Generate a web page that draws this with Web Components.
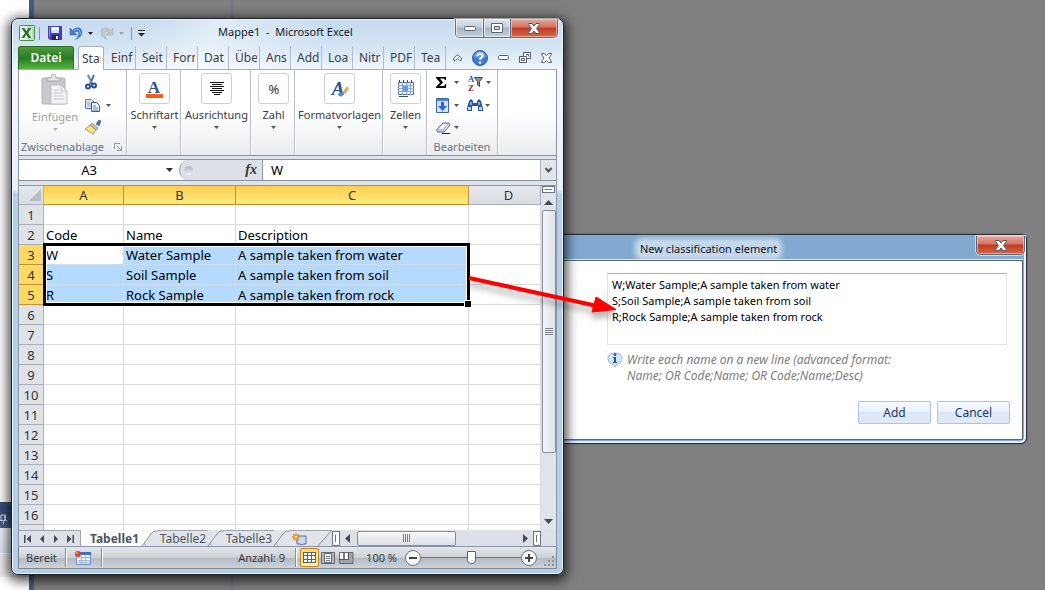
<!DOCTYPE html>
<html lang="de">
<head>
<meta charset="utf-8">
<title>Mappe1 - Microsoft Excel</title>
<style>
html, body { margin: 0; height: 100%; overflow: hidden; }
body { font: 12px/16px "Noto Sans", "Open Sans", sans-serif; color: #1e1e1e; }
</style>
</head>
<body>
<desk-top>
  <classification-dialog></classification-dialog>
  <excel-window></excel-window>
  <pointer-arrow></pointer-arrow>
</desk-top>

<script>
const base = `:host,*{box-sizing:border-box} button{font:inherit;color:inherit;border:0;padding:0;margin:0;background:none} svg{display:block;flex:none;overflow:visible}`;

function define(name, css, html) {
  const template = document.createElement('template');
  template.innerHTML = `<style>${base}${css}</style>${html}`;
  customElements.define(name, class extends HTMLElement {
    constructor() {
      super();
      this.attachShadow({ mode: 'open' }).append(template.content.cloneNode(true));
    }
  });
}

const svg = (w, h, body) => `<svg width="${w}" height="${h}" viewBox="0 0 ${w} ${h}" aria-hidden="true">${body}</svg>`;
const caret = (c = '#555') => svg(5, 3, `<path d="M0 0h5L2.500 3z" fill="${c}"/>`);

const icons = {
  excel: svg(16, 16, `<rect x=".5" y=".5" width="15" height="15" rx="1" fill="#f4faf2" stroke="#3f8f45"/><path d="M9 2h5v12H9z" fill="#fff" stroke="#8fbd8c"/><path d="M9 5h5M9 8h5M9 11h5" stroke="#9fcb9c"/><path d="M2.500 3h3l2 3.300L9.500 3h3L9 8l3.500 5h-3l-2.100-3.400L5.300 13h-3L6 8z" fill="#1f7a2c"/>`),
  save: svg(14, 14, `<path d="M0 0h14v14H2l-2-2z" fill="#4343b4"/><path d="M1 1h1v10H1z" fill="#8c8ce6"/><path d="M3 1h8v6H3z" fill="#f4f8ff"/><path d="M3 4h8v3H3z" fill="#cfe0f8"/><path d="M4 9h7v5H4z" fill="#24245e"/><path d="M8 10h2v3H8z" fill="#fff"/>`),
  undo: svg(12, 14, `<path d="M0 2v7h7L4.500 6.500C7 4.500 9 5.500 8.500 8.500 8.200 10.500 7 12 5.500 13.500 10 12 12 9 12 6 12 1.500 6.500 0 2.500 4.300z" fill="#4b7cc4" stroke="#3563a8" stroke-width=".5"/><path d="M4 4.500c4-3 7 0 6 4" fill="none" stroke="#8db7ee"/>`),
  redo: svg(12, 14, `<path d="M12 2v7H5l2.500-2.500C5 4.500 3 5.500 3.500 8.500c.3 2 1.500 3.500 3 5C2 12 0 9 0 6c0-4.500 5.500-6 9.500-1.700z" fill="#c0c6ce" stroke="#a4abb5" stroke-width=".5"/>`),
  paste: svg(28, 31, `<rect x="1" y="4" width="23" height="26" rx="1" fill="#c9c9cb" stroke="#b3b3b5"/><path d="M6 7V4h4c0-5 5-5 5 0h4v3z" fill="#e8e8e8" stroke="#a5a5a5"/><path d="M10 11h10l6 6v13H10z" fill="#f3f3f5" stroke="#bdbdbf"/><path d="M20 11v6h6M13 16h5M13 19h9M13 22h10M13 25h10" fill="none" stroke="#c5c5c8"/>`),
  cut: svg(12, 15, `<path d="M3 0l4 9M9 0L5 9" stroke="#4c6fa8" stroke-width="2" fill="none"/><path d="M3 1l3 6" stroke="#a8b6cc"/><circle cx="3" cy="11.500" r="2" fill="none" stroke="#23509a" stroke-width="2"/><circle cx="9" cy="10.500" r="2" fill="none" stroke="#23509a" stroke-width="2"/>`),
  copy: svg(16, 13, `<path d="M.5.500h6l3 3v6h-9z" fill="#e7f0fc" stroke="#4c74b2"/><path d="M2 3h3M2 5h5M2 7h5" stroke="#7aa2da"/><path d="M6.500 3.500h5l3 3v6h-8z" fill="#f3f8ff" stroke="#2c5ba6"/><path d="M8 7h3M8 9h5M8 11h5" stroke="#4d80c8"/>`),
  brush: svg(17, 15, `<path d="M11 4l3-4 2 1-2 5z" fill="#5966a6" stroke="#3c457e" stroke-width=".5"/><path d="M7 3l6 5-2 2-6-5z" fill="#c5cad3" stroke="#5a5a70" stroke-width=".6"/><path d="M5 5l6 5-3 4-8-5z" fill="#f2d86d" stroke="#8e762a" stroke-width=".6"/><path d="M3 8l5 4M5 7l4 4" stroke="#fff2ad"/>`),
  launch: svg(8, 8, `<path d="M.5 6V.500H6M3 3l4 4M7.500 3v4.500H3" fill="none" stroke="#90959e"/>`),
  font: svg(17, 19, `<text x="8" y="14" text-anchor="middle" font-family="Liberation Serif" font-weight="bold" font-size="17" fill="#2d4f8e">A</text><path d="M0 15h17v4H0z" fill="#ff5a17"/>`),
  align: svg(14, 13, `<path d="M0 .500h14M2 2.500h10M0 4.500h14M2 6.500h10M0 8.500h14M2 10.500h10M4 12.500h6" stroke="#111"/>`),
  percent: svg(16, 20, `<text x="8" y="15" text-anchor="middle" font-family="Noto Sans" font-size="13" fill="#333">%</text>`),
  styles: svg(18, 24, `<text x="7" y="18" text-anchor="middle" font-family="Liberation Serif" font-style="italic" font-weight="bold" font-size="19" fill="#2d4f8e">A</text><path d="M12 15l4-5 1.500 1.500-3.500 5z" fill="#e8be4c" stroke="#8a6a24" stroke-width=".5"/><path d="M7 17c2-2 4-2 6-1-1 4-4 5-6 1z" fill="#4b86d9"/>`),
  cells: svg(17, 17, `<path d="M1.500 2.500h15v12h-15z" fill="#eef4fc" stroke="#54719f"/><path d="M1 5.500h16M1 8.500h16M1 11.500h16M5.500 2v13M9.500 2v13M13.500 2v13" stroke="#91a9cd"/><path d="M6 6h5v5H6z" fill="#5f9bea"/><path d="M2.500 0v3M6.500 0v3M10.500 0v3M14.500 0v3M2 16.500h9" stroke="#354a70"/>`),
  sum: svg(11, 11, `<path d="M0 0h10v3H9L8 1.500H4L7 5.500 3.500 9H8l1.500-2h.8L10 11H0v-1l4-4.500L0 1z" fill="#000"/>`),
  sort: svg(17, 18, `<text x="4" y="8" text-anchor="middle" font-family="Liberation Serif" font-weight="bold" font-size="9" fill="#2d5ba7">A</text><text x="4" y="17" text-anchor="middle" font-family="Liberation Serif" font-weight="bold" font-size="9" fill="#9c2525">Z</text><path d="M7.500 3.500h8L12.500 7.500v5l-2-1.500V7.500z" fill="#999" stroke="#444"/>`),
  fill: svg(13, 15, `<path d="M.5.500h12v14H.500z" fill="#cfe0f7" stroke="#3c64a4"/><path d="M1 1h11v2H1z" fill="#4a82de"/><path d="M5 4h3v4h3l-4.500 5L2 8h3z" fill="#2867cf"/>`),
  find: svg(16, 14, `<path d="M2 3l2-2 2 2v2h4V3l2-2 2 2 2 7v3h-5V8H5v5H0v-3z" fill="#2d5796"/><path d="M1 9h3v3H1zM12 9h3v3h-3z" fill="#b9d3f5"/><path d="M3 4h2v3H3zM11 4h2v3h-2z" fill="#7ea4da"/>`),
  erase: svg(15, 12, `<path d="M7 1h6l1 2-6 7H2L.5 8z" fill="#f4f7fc" stroke="#445f95"/><path d="M1 8h6l6-7" fill="none" stroke="#7c93bb"/><path d="M6 11.500h8" stroke="#222"/>`),
  fold: svg(9, 7, `<path d="M.7 4L4.500.700 8.300 4v2.300H6.500l-2-2-2 2H.700z" fill="#fff" stroke="#56606c"/>`),
  help: svg(16, 16, `<circle cx="8" cy="8" r="7.500" fill="#3f7bd0" stroke="#2b5da8"/><path d="M2 7a6 6 0 0 1 12 0q-6 2-12 0z" fill="#8db6ec" opacity=".6"/><path d="M5.500 6C5.500 3 10.500 3 10.500 6c0 2-2.500 1.800-2.500 4" fill="none" stroke="#fff" stroke-width="2"/><circle cx="8" cy="12.500" r="1.200" fill="#fff"/>`),
  mini: svg(11, 5, `<rect x=".5" y=".5" width="10" height="4" rx="1" fill="#fff" stroke="#56606c"/>`),
  restore: svg(12, 11, `<path d="M4.500.500h7v6h-7z" fill="#fff" stroke="#56606c"/><path d="M7 2.500h2.500v2" fill="none" stroke="#56606c"/><path d="M.5 4.500h7v6h-7z" fill="#fff" stroke="#56606c"/><path d="M2.500 6.500h3v2h-3z" fill="none" stroke="#56606c"/>`),
  closeDoc: svg(11, 10, `<path d="M.5.500h3l2 2 2-2h3v1L8 5l2.500 3.500v1h-3l-2-2-2 2h-3v-1L3 5 .500 1.500z" fill="#fff" stroke="#56606c"/>`),
  closeWin: svg(12, 11, `<path d="M.5.500h3.500l2 2.500 2-2.500h3.500v1L8.500 5.500l3 4v1H8l-2-2.500-2 2.500H.500v-1l3-4-3-4z" fill="#fff" stroke="#54545f"/>`),
  minWin: svg(12, 5, `<rect x=".5" y=".5" width="11" height="4" rx="1" fill="#fff" stroke="#5b6470"/>`),
  maxWin: svg(12, 10, `<path d="M.5.500h11v9H.500z" fill="#fff" stroke="#5b6470"/><path d="M3.500 3.500h5v3h-5z" fill="#ccd3dc" stroke="#5b6470"/>`),
  first: svg(7, 8, `<path d="M0 0h1.500v8H0zM7 0v8L2.500 4z" fill="#454d59"/>`),
  prev: svg(4, 8, `<path d="M4 0v8L0 4z" fill="#454d59"/>`),
  next: svg(4, 8, `<path d="M0 0v8l4-4z" fill="#454d59"/>`),
  last: svg(7, 8, `<path d="M5.500 0H7v8H5.500zM0 0v8l4.500-4z" fill="#454d59"/>`),
  newSheet: svg(15, 12, `<path d="M5 3h9v8h-3l-1 1-2-1H5z" fill="#c9dcf5" stroke="#4f6fa0"/><path d="M4 0v8M0 4h8M1.200 1.200l5.600 5.600M6.800 1.200L1.200 6.800" stroke="#e98b16" stroke-width="1.300"/><circle cx="4" cy="4" r="1.300" fill="#fff3c0"/>`),
  macro: svg(16, 14, `<path d="M1.500 1.500h14v12h-14z" fill="#f0f5ff" stroke="#6f8fc8"/><path d="M1 1h15v3H1z" fill="#3b6fd0"/><path d="M3 6.500h12M3 9.500h12M3 11.500h12M6.500 5v8M10.500 5v8" stroke="#9fb7e0"/><circle cx="3" cy="3" r="3" fill="#d9472a"/><circle cx="2" cy="2" r="1" fill="#f79c84"/>`),
  grid: svg(13, 11, `<path d="M0 0h13v11H0z" fill="#5d616b"/><path d="M1 1h3v2H1zM5 1h3v2H5zM9 1h3v2H9zM1 4h3v3H1zM5 4h3v3H5zM9 4h3v3H9zM1 8h3v2H1zM5 8h3v2H5zM9 8h3v2H9z" fill="#fff"/>`),
  page: svg(14, 12, `<path d="M.5.500h13v11H.500z" fill="#b5b9c1" stroke="#666a73"/><path d="M3.500 1.500h7v9h-7z" fill="#fff" stroke="#666a73"/><path d="M5 4.500h4M5 6.500h4M5 8.500h4" stroke="#777"/>`),
  breaks: svg(15, 12, `<path d="M.5.500h13.500v11H.500z" fill="#9ea3ac" stroke="#666a73"/><path d="M1 1h3v6H1zM6 1h3v6H6z" fill="#fff"/><path d="M5 0v7.500H0M9.500 0v7.500H5" fill="none" stroke="#555"/>`),
  info: svg(16, 16, `<path d="M8 1c4 0 7 2 7 5.500S12 12 9.500 12.500L8 15l-1.500-2.500C4 12 1 10.500 1 6.500S4 1 8 1z" fill="#d4e6f8" stroke="#9ab6d2"/><circle cx="8" cy="2.600" r="1.400" fill="#24539c"/><path d="M6 5h3v5h1v1H6v-1h1V6H6z" fill="#24539c"/>`),
  pin: svg(7, 10, `<path d="M1 6.500V1h4.500v5.500M0 6.500h7M3.500 7v3M4.500 1v5" fill="none" stroke="#cfd9ef"/>`)
};

define('desk-top', `
  :host{display:block;position:relative;height:100%;min-height:590px;overflow:hidden;
    background:linear-gradient(90deg,#fff 0 29px,#445a86 29px 34px,#808080 34px 230px,#787883 230px 234px,#808080 234px)}
  .dock{position:absolute;left:0;top:502px;width:29px}
  .head{height:26px;background:linear-gradient(#344a74,#4d638f);border-top:4px solid #3c5078;padding:8px 0 0}
  .row{height:25px;background:linear-gradient(#f4f7fb,#dbe7f4)}
  .row+.row{height:24px;background:#ececee;border-top:1px solid #fff}`,
  `<div class="dock"><div class="head">${icons.pin}</div><div class="row"></div><div class="row"></div></div><slot></slot>`);

define('pointer-arrow', `
  :host{display:block;position:absolute;left:calc(100% - 576px);top:270px;width:156px;height:54px;pointer-events:none;
    filter:drop-shadow(0 6px 3px rgba(0,0,0,.3))}`,
  svg(156, 54, `<path d="M0 8L128 36" stroke="#f00" stroke-width="4"/><path d="M127 27L147 39.500 123 42z" fill="#f00" stroke="#f00"/>`));

define('window-buttons', `
  :host{display:flex;height:19px;border:1px solid #5d6977;border-top:0;border-radius:0 0 5px 5px;overflow:hidden;
    box-shadow:0 0 0 1px rgba(255,255,255,.6)}
  button{display:grid;place-items:center;width:27px;
    background:linear-gradient(#dbe5ef,#c4d0dd 45%,#a5b5c8 50%,#c3d2e2);box-shadow:inset 0 0 0 1px rgba(255,255,255,.6)}
  button+button{border-left:1px solid #5d6977}
  .close{width:47px;background:linear-gradient(#e4a99e,#d4735f 45%,#bf3a20 50%,#d6694b);box-shadow:inset 0 0 0 1px rgba(255,210,200,.6)}
  :host([single]) .tool{display:none}
  :host([single]) .close{border-left:0}`,
  `<button class="tool" aria-label="Minimieren">${icons.minWin}</button><button class="tool" aria-label="Maximieren">${icons.maxWin}</button><button class="close" aria-label="Schließen">${icons.closeWin}</button>`);

define('classification-dialog', `
  :host{display:flex;flex-direction:column;position:absolute;right:18px;top:234px;width:487px;padding:1px 3px 3px 0;
    border:1px solid #2b3138;border-radius:6px;background:#84a9d0;box-shadow:inset -1px -1px 0 1px #e4f0fb,0 0 2px rgba(0,0,0,.4)}
  header{display:flex;height:24px;align-items:flex-start;justify-content:space-between;padding-left:97px;margin-right:-2px}
  h1{margin:5px 0 0;font-size:11px;line-height:16px;font-weight:400;color:#10151c;padding:0 2px;
    background:rgba(225,236,247,.7);box-shadow:0 0 5px 3px rgba(225,236,247,.7);border-radius:4px}
  main{background:#fff;border:1px solid #5a6470;box-shadow:0 -1px 0 #dcebf8;padding:12px 15px 15px 65px}
  textarea{display:block;width:100%;height:72px;resize:none;border:1px solid #dfe2e8;border-top-color:#abadb3;background:#fff;
    padding:3px 4px;font:11px/16px "Noto Sans","Open Sans",sans-serif;color:#000;outline:0;overflow:hidden}
  .hint{display:flex;gap:4px;margin:7px 0 0;font-style:italic;color:#7d7d7d}
  p{margin:0}
  footer{display:flex;justify-content:flex-end;gap:6px;margin:17px -3px 0 0}
  footer button{width:73px;height:23px;border:1px solid #a9c3e3;border-radius:2px;color:#1e395b;
    background:linear-gradient(#f7fafe,#e9f1fb 45%,#dce8f7 50%,#dfe9f7)}`,
  `<header><h1>New classification element</h1><window-buttons single></window-buttons></header>
  <main>
    <textarea aria-label="Classification names" spellcheck="false">W;Water Sample;A sample taken from water
S;Soil Sample;A sample taken from soil
R;Rock Sample;A sample taken from rock</textarea>
    <div class="hint">${icons.info}<p>Write each name on a new line (advanced format:<br>Name; OR Code;Name; OR Code;Name;Desc)</p></div>
    <footer><button>Add</button><button>Cancel</button></footer>
  </main>`);

define('excel-window', `
  :host{display:flex;flex-direction:column;position:absolute;left:11px;top:18px;bottom:15px;width:calc(100% - 492px);
    border:1px solid #1d2127;border-radius:7px;padding:0 6px 5px;
    background:linear-gradient(115deg,rgba(255,255,255,0) 120px,rgba(255,255,255,.45) 190px,rgba(255,255,255,0) 290px) 0 0/100% 50px no-repeat,
      linear-gradient(#c5daee,#d5e5f4 30px,#f2f7fc 52px,#e6f0f9 170px,#b6d0ea 175px,#b4cee9);
    box-shadow:inset 0 0 0 1px #eaf5fd,0 3px 12px 3px rgba(0,0,0,.72)}
  sheet-view{flex:1;min-height:0}`,
  `<title-bar>Mappe1&nbsp; -&nbsp; Microsoft Excel</title-bar>
  <ribbon-tabs></ribbon-tabs><ribbon-panel></ribbon-panel><formula-bar></formula-bar>
  <sheet-view></sheet-view><sheet-tabs></sheet-tabs><status-bar></status-bar>`);

define('title-bar', `
  :host{display:flex;flex:none;height:27px;margin-right:-1px;align-items:flex-start}
  nav{display:flex;align-items:center;height:16px;margin-top:6px;padding-left:1px;width:190px}
  nav button{margin-left:8px}
  nav .drop{margin-left:6px}
  i{width:1px;height:13px;background:#8795a6;margin-left:4px}
  i.far{margin-left:7px}
  h1{flex:1;margin:5px 0 0;font-size:11px;line-height:16px;font-weight:400;color:#14181d;padding-left:10px;white-space:nowrap}`,
  `<nav>${icons.excel}<i></i><button aria-label="Speichern">${icons.save}</button>
    <button aria-label="Rückgängig">${icons.undo}</button><button class="drop" aria-label="Rückgängig-Liste">${caret('#222')}</button>
    <button aria-label="Wiederholen">${icons.redo}</button><button class="drop" aria-label="Wiederholen-Liste">${caret('#9aa4b0')}</button>
    <i class="far"></i><button class="drop" aria-label="Symbolleiste anpassen">${svg(7, 7, '<path d="M0 .500h7" stroke="#222"/><path d="M0 3h7L3.500 6.500z" fill="#222"/>')}</button></nav>
  <h1><slot></slot></h1><window-buttons></window-buttons>`);

define('ribbon-tab', `
  :host{display:block;flex:0 1 31px;min-width:0;border-right:1px solid #b3bcc8;height:23px}
  button{display:block;width:100%;height:100%;padding:1px 2px 0 6px;text-align:left;color:#3b3f46}
  span{display:block;overflow:hidden;white-space:nowrap;line-height:16px}
  :host([file]){flex-basis:56px;border:1px solid #2c6b25;border-bottom:0;border-radius:3px 3px 0 0;margin-right:4px;
    background:linear-gradient(#4c9c3a,#2a7a24 50%,#2f8a25 60%,#58b53e)}
  :host([file]) button{color:#fff;text-align:center;padding:0;font-weight:600}
  :host([active]){flex-basis:26px;height:24px;background:#fff;border:1px solid #a9b2be;border-bottom:0;border-radius:3px 3px 0 0;margin-right:1px;z-index:1}
  :host([active]) button{padding-left:3px}`,
  `<button role="tab"><span><slot></slot></span></button>`);

define('ribbon-tabs', `
  :host{display:flex;flex:none;height:23px;justify-content:space-between;position:relative;z-index:1}
  .tabs{display:flex;flex:0 1 428px;min-width:0}
  .tools{display:flex;align-items:center;gap:10px;padding-right:5px}`,
  `<div class="tabs" role="tablist"><ribbon-tab file>Datei</ribbon-tab><ribbon-tab active>Start</ribbon-tab><ribbon-tab>Einf</ribbon-tab><ribbon-tab>Seit</ribbon-tab><ribbon-tab>Form</ribbon-tab><ribbon-tab>Dat</ribbon-tab><ribbon-tab>Übe</ribbon-tab><ribbon-tab>Ans</ribbon-tab><ribbon-tab>Add</ribbon-tab><ribbon-tab>Loa</ribbon-tab><ribbon-tab>Nitr</ribbon-tab><ribbon-tab>PDF</ribbon-tab><ribbon-tab>Tea</ribbon-tab></div>
  <div class="tools"><button aria-label="Menüband minimieren">${icons.fold}</button><button aria-label="Hilfe">${icons.help}</button><button aria-label="Fenster minimieren">${icons.mini}</button><button aria-label="Fenster wiederherstellen">${icons.restore}</button><button aria-label="Fenster schließen">${icons.closeDoc}</button></div>`);

define('ribbon-group', `
  :host{display:block;height:100%;border-right:1px solid #b9bec6;box-shadow:1px 0 0 #fff;text-align:center;white-space:nowrap;color:#3c3c3c}
  button{display:flex;flex-direction:column;align-items:center;width:100%;padding:3px 0 0 2px}
  .box{display:grid;place-items:center;width:31px;height:31px;border:1px solid #cfd0d4;border-radius:3px;background:#fff}
  .name{line-height:16px;margin:3px 0}`,
  `<button><span class="box"><slot name="icon"></slot></span><span class="name"><slot></slot></span>${caret()}</button>`);

define('ribbon-panel', `
  :host{display:flex;flex:none;height:87px;border:1px solid #a3acb8;border-bottom-color:#8b929c;border-left-color:#8a96a5;border-right-color:#8a96a5;
    background:linear-gradient(#fff 50%,#e9ecf0);font-size:11px}
  .set{display:flex;flex-direction:column;border-right:1px solid #b9bec6;box-shadow:1px 0 0 #fff;color:#6b7280}
  .clip{width:108px}
  .edit{width:71px}
  .body{display:flex;flex:1}
  .paste{display:flex;flex-direction:column;align-items:center;width:60px;margin-left:6px;padding-top:4px;color:#a0a0a0}
  .paste span{margin:4px 0 3px;line-height:16px}
  .col{display:flex;flex-direction:column;justify-content:space-between;height:60px;margin-top:5px}
  .line{display:flex;align-items:center;justify-content:space-between;gap:5px;height:15px}
  .foot{display:flex;align-items:center;justify-content:space-between;height:16px;padding:0 4px 0 2px}
  .edit .foot{justify-content:center;padding:0}
  .edit .body{gap:8px;padding-left:9px}
  .edit .col{width:23px}
  .edit .line{gap:2px}
  .g1{width:54px}.g2{width:70px}.g3{width:44px}.g4{width:88px}.g5{width:44px}`,
  `<section class="set clip"><div class="body"><button class="paste">${icons.paste}<span>Einfügen</span>${caret('#b5b5b5')}</button>
    <div class="col"><button class="line" aria-label="Ausschneiden">${icons.cut}</button><button class="line" aria-label="Kopieren">${icons.copy}${caret()}</button><button class="line" aria-label="Format übertragen">${icons.brush}</button></div></div>
    <div class="foot"><span>Zwischenablage</span><button aria-label="Zwischenablage öffnen">${icons.launch}</button></div></section>
  <ribbon-group class="g1"><span slot="icon">${icons.font}</span>Schriftart</ribbon-group>
  <ribbon-group class="g2"><span slot="icon">${icons.align}</span>Ausrichtung</ribbon-group>
  <ribbon-group class="g3"><span slot="icon">${icons.percent}</span>Zahl</ribbon-group>
  <ribbon-group class="g4"><span slot="icon">${icons.styles}</span>Formatvorlagen</ribbon-group>
  <ribbon-group class="g5"><span slot="icon">${icons.cells}</span>Zellen</ribbon-group>
  <section class="set edit"><div class="body">
    <div class="col"><button class="line" aria-label="Summe">${icons.sum}${caret()}</button><button class="line" aria-label="Füllbereich">${icons.fill}${caret()}</button><button class="line" aria-label="Löschen">${icons.erase}${caret()}</button></div>
    <div class="col"><button class="line" aria-label="Sortieren und Filtern">${icons.sort}${caret()}</button><button class="line" aria-label="Suchen">${icons.find}${caret()}</button><span class="line"></span></div></div>
    <div class="foot"><span>Bearbeiten</span></div></section>`);

define('formula-bar', `
  :host{display:flex;flex:none;height:29px;padding:3px 0 4px;background:#dfe3ea;border:1px solid #8a96a5;border-width:0 1px}
  .in{display:flex;flex:1;min-width:0;border:1px solid #8a919c;border-width:1px 0;background:#fff}
  input{border:0;outline:0;background:none;padding:0;min-width:0;font:13px/20px "Noto Sans","Open Sans",sans-serif;color:#000}
  .name{width:140px;text-align:center}
  .pick{display:grid;place-items:center;width:20px}
  .fx{display:flex;align-items:center;justify-content:space-between;width:84px;padding:0 5px 0 4px;background:#dde1e7;
    border:1px solid #8f98a5;border-width:0 1px 0 1px;border-radius:11px 0 0 11px}
  .knob{width:9px;height:9px;border-radius:50%;background:linear-gradient(#aab2bd,#f2f4f7)}
  .fx button{font:italic bold 14px/20px "Liberation Serif",serif;color:#333}
  .val{flex:1;padding-left:8px}
  .more{width:16px;background:#e2e5ea;border-left:1px solid #a9b0ba;display:grid;place-items:center}`,
  `<div class="in"><input class="name" aria-label="Namenfeld" value="A3"><button class="pick" aria-label="Namen">${svg(7, 4, '<path d="M0 0h7L3.500 4z" fill="#333"/>')}</button>
   <span class="fx"><span class="knob"></span><button aria-label="Funktion einfügen">fx</button></span>
   <input class="val" aria-label="Formel" value="W"><button class="more" aria-label="Formelleiste erweitern">${svg(7, 6, '<path d="M.5 1l3 3.500 3-3.500" fill="none" stroke="#4d5560" stroke-width="2"/>')}</button></div>`);

const data = { 2: ['Code', 'Name', 'Description'], 3: ['W', 'Water Sample', 'A sample taken from water'],
  4: ['S', 'Soil Sample', 'A sample taken from soil'], 5: ['R', 'Rock Sample', 'A sample taken from rock'] };
const rows = Array.from({ length: 17 }, (_, i) => {
  const n = i + 1, d = data[n] || ['', '', ''], sel = n >= 3 && n <= 5;
  return `<tr class="${sel ? 'sel' : ''}"><th scope="row">${n < 17 ? n : ''}</th>${d.map(t => `<td>${t}</td>`).join('')}<td></td></tr>`;
}).join('');

define('sheet-view', `
  :host{display:flex;border:1px solid #8a96a5;border-width:1px 1px 0;background:#fff}
  .cells{position:relative;flex:1;min-width:0;overflow:hidden}
  table{width:100%;table-layout:fixed;border-collapse:separate;border-spacing:0;font-size:13px;line-height:18px}
  .r{width:25px}.a{width:80px}.b{width:112px}.d{width:72px}
  th,td{height:20px;padding:1px 2px 0;border-right:1px solid #d9dadb;border-bottom:1px solid #d9dadb;font-weight:400;text-align:left;white-space:nowrap;overflow:hidden;color:#000}
  th{background:#dfe2e7;border-color:#a9b0b9;text-align:center;color:#333;padding:1px 0 0}
  thead th{height:19px;padding:0;background:linear-gradient(#e4e7eb,#d9dde3)}
  thead th:last-child{padding-left:8px}
  thead .on{background:linear-gradient(#ffce54,#ffec78);border-color:#c29136}
  .sel th{background:#ffd964;border-color:#c29136}
  .sel td:not(:last-child){background:#b5daff;border-bottom-color:#cfdbe8}
  tbody .sel:nth-child(3) td:nth-child(2){background:#fff}
  thead th:first-child svg{margin-left:10px}
  .frame{position:absolute;left:24px;right:71px;top:57px;height:63px;border:3px solid #000;box-shadow:inset 0 0 0 1px #fff;pointer-events:none}
  .frame::after{content:"";position:absolute;right:-4px;bottom:-4px;width:6px;height:6px;background:#000;border:1px solid #fff;border-width:1px 0 0 1px}
  .bar{display:flex;flex-direction:column;align-items:center;width:15px;background:#dfe3ea}
  .split{width:13px;height:7px;border:1px solid #6b7480;background:#fff;margin:0 0 7px;padding:2px}
  .split::after{content:"";display:block;height:1px;background:#6b7480}
  .thumb{display:grid;place-items:center;width:14px;flex:0 1 243px;margin-top:5px;border:1px solid #858e9b;border-radius:2px;background:linear-gradient(90deg,#f4f6f8,#dfe3e8)}
  .down{margin-top:auto;margin-bottom:6px}`,
  `<div class="cells"><table><colgroup><col class="r"><col class="a"><col class="b"><col><col class="d"></colgroup>
    <thead><tr><th>${svg(12, 12, '<path d="M12 0v12H0z" fill="#b8bdc5"/>')}</th><th class="on" scope="col">A</th><th class="on" scope="col">B</th><th class="on" scope="col">C</th><th scope="col">D</th></tr></thead>
    <tbody>${rows}</tbody></table><div class="frame"></div></div>
   <div class="bar"><span class="split"></span><button aria-label="Nach oben">${svg(9, 5, '<path d="M0 5h9L4.500 0z" fill="#444c57"/>')}</button>
    <span class="thumb">${svg(8, 8, '<path d="M0 .500h8M0 2.500h8M0 4.500h8M0 6.500h8" stroke="#7a828e"/>')}</span>
    <button class="down" aria-label="Nach unten">${svg(9, 5, '<path d="M0 0h9L4.500 5z" fill="#444c57"/>')}</button></div>`);

const slant = (left, right) => svg(16, 15, `<path d="M0-1h16v1h-3q-2 0-4 3L2 14l-1 1H0z" fill="${left}"/><path d="M16 0h-3q-2 0-4 3L1 15h15z" fill="${right}"/><path d="M0 15L9 3q2-3 4-3h3" fill="none" stroke="#8b94a1"/><path d="M2 12l2 3" stroke="#a4acb8"/>`);

define('sheet-tabs', `
  :host{display:flex;flex:none;height:17px;background:#dde1e7;border:1px solid #8a96a5;border-width:0 1px 1px;color:#4c5563;font-size:12px;line-height:15px}
  .nav{display:flex;align-items:center;justify-content:space-between;width:62px;padding:0 6px 0 5px;border-top:1px solid #9ba4b0;border-right:1px solid #9ba4b0}
  .tabs{display:flex;flex:1;min-width:0;border-top:1px solid #9ba4b0}
  .tabs button{width:50px;text-align:center;background:#e1e4e9;white-space:nowrap}
  .tabs .on{width:61px;background:#fff;font-weight:700;margin-top:-1px;padding-top:1px;padding-left:6px}
  .tabs .new{width:26px;padding-left:2px}
  .scroll{display:flex;align-items:center;width:209px}
  .grip{width:8px;height:15px;border:1px solid #6b7480;background:#fff;padding:3px 0 3px 2px;margin-right:5px}
  .grip::after{content:"";display:block;width:1px;height:7px;background:#6b7480}
  .thumb{display:grid;place-items:center;width:99px;height:15px;margin:0 auto 0 7px;border:1px solid #858e9b;border-radius:2px;background:linear-gradient(#f6f7f9,#dce0e6)}
  .end{margin:0 0 0 5px}
  .corner{width:15px}`,
  `<div class="nav"><button aria-label="Erstes Blatt">${icons.first}</button><button aria-label="Voriges Blatt">${icons.prev}</button><button aria-label="Nächstes Blatt">${icons.next}</button><button aria-label="Letztes Blatt">${icons.last}</button></div>
   <div class="tabs"><button class="on">Tabelle1</button>${slant('#fff', '#e1e4e9')}<button>Tabelle2</button>${slant('#e1e4e9', '#e1e4e9')}<button>Tabelle3</button>${slant('#e1e4e9', '#e1e4e9')}<button class="new" aria-label="Neues Blatt">${icons.newSheet}</button>${svg(16, 15, '<path d="M0 0h16L2 15H0z" fill="#e1e4e9"/><path d="M15 0L2 15" stroke="#8b94a1"/>')}</div>
   <div class="scroll"><span class="grip"></span><button aria-label="Nach links">${svg(5, 9, '<path d="M5 0v9L0 4.500z" fill="#444c57"/>')}</button><span class="thumb">${svg(8, 8, '<path d="M.5 0v8M2.500 0v8M4.500 0v8M6.500 0v8" stroke="#7a828e"/>')}</span><button aria-label="Nach rechts">${svg(5, 9, '<path d="M0 0v9l5-4.500z" fill="#444c57"/>')}</button><span class="grip end"></span></div>
   <span class="corner"></span>`);

define('status-bar', `
  :host{display:flex;flex:none;align-items:center;height:22px;border:1px solid #7c8692;border-top:0;background:linear-gradient(#e4e6ea,#cdd1d7 50%,#b4bac3 52%,#ced2d8);color:#363a40;font-size:11px;line-height:16px;white-space:nowrap}
  i{width:1px;height:19px;background:#868d98;box-shadow:1px 0 0 #fff}
  .ready{padding:0 8px 0 7px}
  .macro{padding:0 10px 0 9px}
  .count{flex:1;text-align:right;padding-right:10px}
  .view{display:flex;align-items:center;gap:4px;margin-left:4px}
  .on{display:grid;place-items:center;width:19px;height:19px;border:1px solid #c2862c;border-radius:2px;background:linear-gradient(#ffd76c,#fff08f);margin-right:-2px}
  .pct{margin:0 8px 0 12px}
  .round{width:16px;height:16px;border:1px solid #6c747f;border-radius:50%;background:#f7f8fa;display:grid;place-items:center}
  input{appearance:none;-webkit-appearance:none;width:100px;height:14px;margin:0;background:linear-gradient(#6c747f,#6c747f) 0 50%/100% 1px no-repeat}
  input::-webkit-slider-thumb{-webkit-appearance:none;width:9px;height:13px;background:#fff;border:1px solid #5d6570;border-radius:1px 1px 5px 5px}
  .grip{margin:8px 1px 0 7px}`,
  `<span class="ready">Bereit</span><i></i><button class="macro" aria-label="Makro aufzeichnen">${icons.macro}</button><i></i><span class="count">Anzahl: 9</span><i></i>
   <div class="view"><button class="on" aria-label="Normal">${icons.grid}</button><button aria-label="Seitenlayout">${icons.page}</button><button aria-label="Umbruchvorschau">${icons.breaks}</button></div>
   <span class="pct">100 %</span><button class="round" aria-label="Verkleinern">${svg(8, 8, '<path d="M0 4h8" stroke="#444" stroke-width="2"/>')}</button><input type="range" aria-label="Zoom" value="50"><button class="round" aria-label="Vergrößern">${svg(8, 8, '<path d="M0 4h8M4 0v8" stroke="#444" stroke-width="2"/>')}</button>
   <span class="grip">${svg(11, 11, '<path d="M8 0h2v2H8zM8 4h2v2H8zM4 4h2v2H4zM8 8h2v2H8zM4 8h2v2H4zM0 8h2v2H0z" fill="#8a919b"/>')}</span>`);
</script>
</body>
</html>
